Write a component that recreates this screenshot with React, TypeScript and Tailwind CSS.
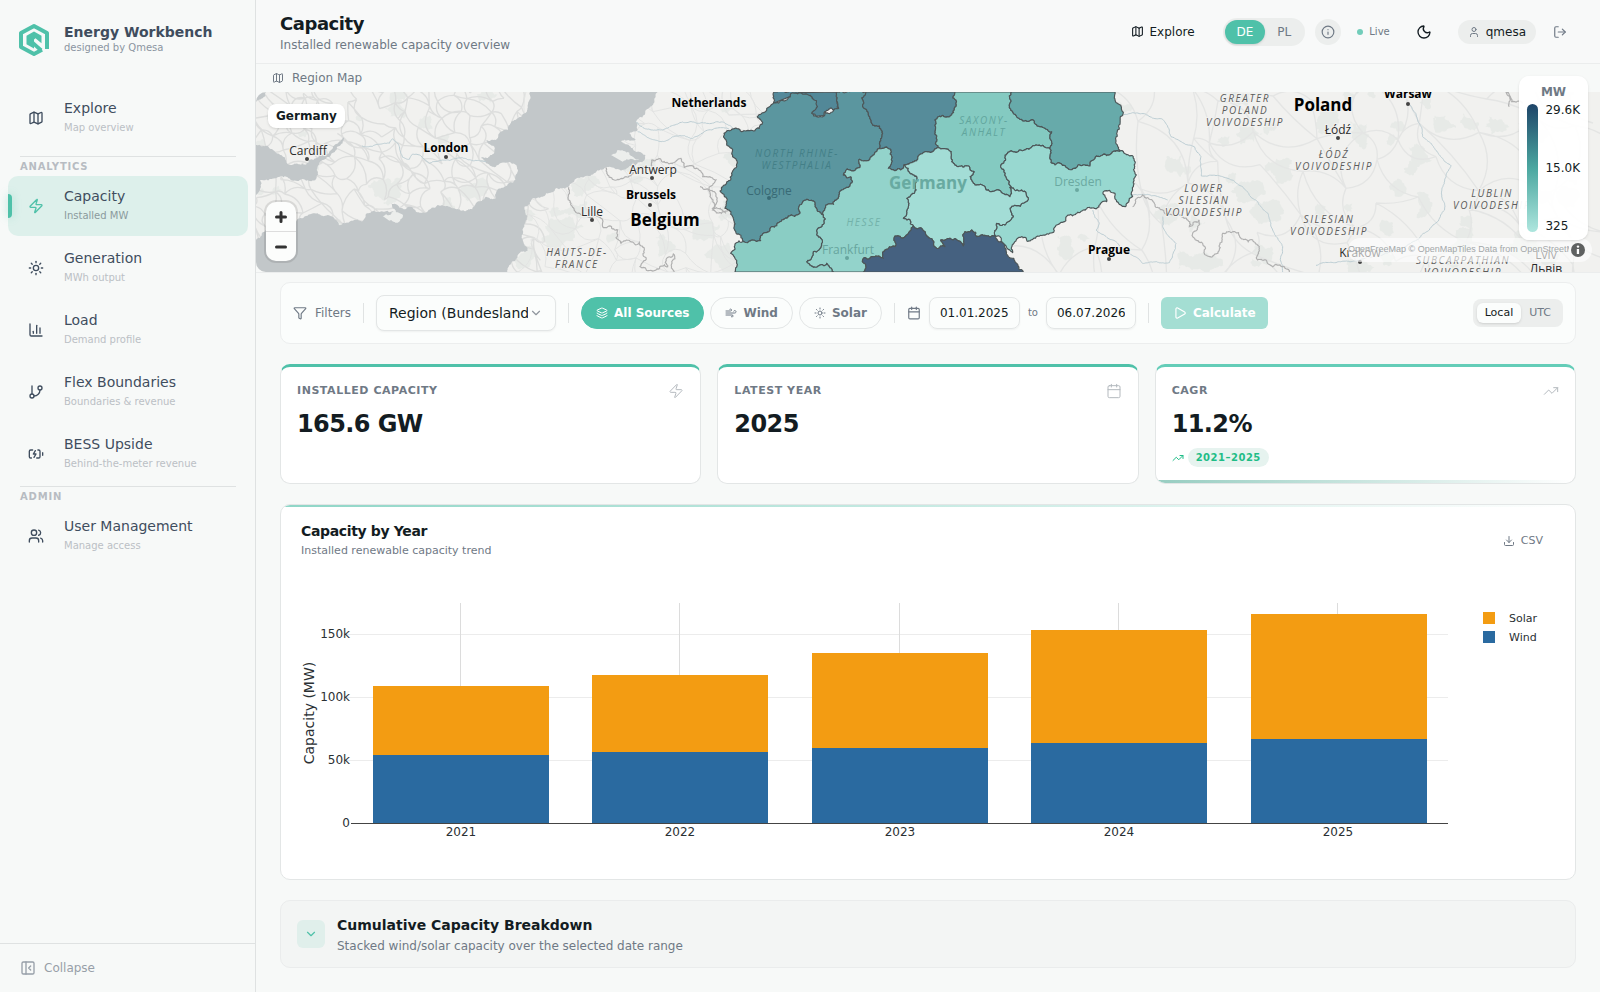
import type { ReactNode } from 'react';
import {
  BatteryCharging,
  Calendar,
  ChartColumn,
  ChevronDown,
  Download,
  Filter,
  GitBranch,
  Info,
  Layers,
  LogOut,
  Map as MapIcon,
  Moon,
  PanelLeftClose,
  Play,
  Sun,
  TrendingUp,
  User,
  Users,
  Wind,
  Zap,
  type LucideIcon,
} from 'lucide-react';

interface NavEntry {
  readonly title: string;
  readonly hint: string;
  readonly icon: LucideIcon;
  readonly active?: boolean;
}

const analyticsNav: readonly NavEntry[] = [
  { title: 'Capacity', hint: 'Installed MW', icon: Zap, active: true },
  { title: 'Generation', hint: 'MWh output', icon: Sun },
  { title: 'Load', hint: 'Demand profile', icon: ChartColumn },
  { title: 'Flex Boundaries', hint: 'Boundaries & revenue', icon: GitBranch },
  { title: 'BESS Upside', hint: 'Behind-the-meter revenue', icon: BatteryCharging },
];

function Logo() {
  return (
    <svg width="32" height="34" viewBox="0 0 32 34" fill="none" aria-hidden="true">
      <path
        d="M24 26.8 L16 31 L3 24 V10 L16 3 L29 10 V26"
        stroke="#4fc1a9"
        strokeWidth="4"
        strokeLinejoin="round"
      />
      <path d="M16 8.5 L23.5 12.7 V20.3 L17.5 15.2 L16 16.4 V25.5 L8.5 21.3 V12.7 Z" fill="#4fc1a9" />
      <path d="M16 18.5 L24.5 26 L21 28 L16 23.5 Z" fill="#4fc1a9" />
    </svg>
  );
}

function NavItem({ title, hint, icon: Icon, active }: NavEntry) {
  return (
    <a
      href="#"
      aria-current={active ? 'page' : undefined}
      className={`relative flex h-15 items-center gap-5 rounded-[10px] pl-5 ${
        active ? 'bg-[#ddf0eb]' : ''
      }`}
    >
      {active && (
        <span className="absolute left-0 top-[18px] h-6 w-1 rounded-r bg-[#4fc1a9] shadow-[0_0_8px_rgba(79,193,169,0.4)]" />
      )}
      <Icon size={16} className={active ? 'text-[#4fc1a9]' : 'text-[#3f4d5e]'} />
      <span className="flex flex-col">
        <span className="text-sm leading-5 text-[#3f4d5e]">{title}</span>
        <span className={`text-[10px] leading-5 ${active ? 'text-[#8b9a9d]' : 'text-[#bbc0c5]'}`}>
          {hint}
        </span>
      </span>
    </a>
  );
}

function NavHeading({ children }: { readonly children: ReactNode }) {
  return (
    <h2 className="mx-3 border-t border-[#dfe2e2] pb-px pt-0.5 text-[10px] font-bold leading-4 tracking-[0.08em] text-[#b7bcc2]">
      {children}
    </h2>
  );
}

function Sidebar() {
  return (
    <aside className="flex w-64 shrink-0 flex-col border-r border-[#dfe2e2] bg-[#f7f9f8]">
      <div className="flex h-20 items-center gap-3.5 pl-[18px]">
        <Logo />
        <div>
          <p className="text-sm font-bold leading-4 text-[#3f4d5e]">Energy Workbench</p>
          <p className="text-[10px] leading-4 text-[#8b95a1]">designed by Qmesa</p>
        </div>
      </div>
      <nav className="flex flex-col pl-2 pr-[7px] pt-2">
        <NavItem title="Explore" hint="Map overview" icon={MapIcon} />
        <div className="mt-2">
          <NavHeading>ANALYTICS</NavHeading>
        </div>
        <div className="flex flex-col gap-0.5 pb-0.5">
          {analyticsNav.map((entry) => (
            <NavItem key={entry.title} {...entry} />
          ))}
        </div>
        <NavHeading>ADMIN</NavHeading>
        <NavItem title="User Management" hint="Manage access" icon={Users} />
      </nav>
      <div className="mt-auto border-t border-[#dfe2e2] px-5 py-4">
        <button type="button" className="flex items-center gap-2 text-xs text-[#979fa8]">
          <PanelLeftClose size={16} />
          Collapse
        </button>
      </div>
    </aside>
  );
}

function Header() {
  return (
    <header className="flex h-16 items-center justify-between border-b border-[#ebeded] bg-[#f8f9f9] px-6">
      <div className="pt-0.5">
        <h1 className="text-lg font-bold leading-6 tracking-tight text-[#131c22]">Capacity</h1>
        <p className="text-xs leading-[18px] text-[#6f7985]">Installed renewable capacity overview</p>
      </div>
      <div className="flex items-center">
        <button type="button" className="mr-7 flex items-center gap-1.5 text-xs text-[#131c22]">
          <MapIcon size={13} />
          Explore
        </button>
        <div className="mr-2.5 flex rounded-full bg-[#eceeed] p-0.5 text-xs text-[#6f7985]">
          <button type="button" className="h-6 rounded-full bg-[#4fc1a9] px-3 text-white shadow-sm">
            DE
          </button>
          <button type="button" className="h-6 rounded-full px-3">
            PL
          </button>
        </div>
        <button
          type="button"
          aria-label="About this data"
          className="mr-4 flex size-[26px] items-center justify-center rounded-full bg-[#eceeed] text-[#6f7985]"
        >
          <Info size={14} />
        </button>
        <span className="flex items-center gap-1.5 text-[10px] text-[#6f7985]">
          <span className="size-1.5 rounded-full bg-[#72cdba]" />
          Live
        </span>
        <button
          type="button"
          aria-label="Dark mode"
          className="mx-[18px] flex size-8 items-center justify-center text-[#131c22]"
        >
          <Moon size={16} />
        </button>
        <span className="mr-2 flex h-6 items-center gap-1.5 rounded-full bg-[#eceeed] px-2.5 text-xs text-[#131c22]">
          <User size={12} className="text-[#6f7985]" />
          qmesa
        </span>
        <button
          type="button"
          aria-label="Log out"
          className="flex size-8 items-center justify-center text-[#6f7985]"
        >
          <LogOut size={14} />
        </button>
      </div>
    </header>
  );
}

/* ---------- Map ---------- */

type Pt = readonly [number, number];

// Stable pseudo random value in -1..1 for a pair of numbers
function noise(a: number, b: number) {
  const s = Math.sin(a * 12.9898 + b * 78.233) * 43758.5453;
  return (s - Math.floor(s)) * 2 - 1;
}

function parse(line: string): Pt[] {
  return line.split(' ').map((pair) => {
    const [x, y] = pair.split(',').map(Number);
    return [x, y] as const;
  });
}

// Midpoint displacement, gives straight segments the look of a surveyed border
function roughen(points: readonly Pt[], amount: number): Pt[] {
  const out: Pt[] = [points[0]];
  const split = (a: Pt, b: Pt) => {
    const dx = b[0] - a[0];
    const dy = b[1] - a[1];
    const length = Math.hypot(dx, dy);
    // segments longer than this only run along the frame
    if (length < 5 || length > 300) {
      out.push(b);
      return;
    }
    const shift = noise(a[0] + b[0], a[1] + b[1]) * amount;
    const mid: Pt = [(a[0] + b[0]) / 2 - dy * shift, (a[1] + b[1]) / 2 + dx * shift];
    split(a, mid);
    split(mid, b);
  };
  for (let i = 1; i < points.length; i++) split(points[i - 1], points[i]);
  return out;
}

function toPath(points: readonly Pt[], closed = false) {
  return 'M' + points.map(([x, y]) => `${x.toFixed(1)} ${y.toFixed(1)}`).join('L') + (closed ? 'Z' : '');
}

const rough = (line: string, closed = false, amount = 0.2) =>
  toPath(roughen(parse(line), amount), closed);

// Borders shared by two states, each stored once
const arcs: Record<string, Pt[]> = Object.fromEntries(
  Object.entries({
    nrwWest:
      '220,70 200,86 185,100 172,110 188,128 178,145 150,152 125,155 95,148 72,160 78,180 95,205 105,235 100,270 92,300 60,333 80,355 75,385 103,425 105,452 122,465 132,485',
    nrwTop: '498,36 412,36 410,60 416,85 375,95 372,108 350,110 335,100 352,80 335,50 300,38 250,62 220,70',
    niTop: '220,70 222,36 300,38',
    niPocket: '300,38 335,50 352,80 335,100 350,110 372,108 375,95 416,85 410,60 412,36',
    nrwRlp: '132,485 182,482 190,460 215,440 240,425 265,408 300,400 320,358 345,370 370,405',
    nrwHe: '370,405 378,375 415,355 425,330 450,318 452,290 430,285 440,268 480,262 478,238 505,242 538,205',
    nrwNi: '538,205 548,160 515,130 505,100 488,75 498,36',
    niHe: '538,205 572,208 575,235 565,265 585,272 612,255',
    niTh: '612,255 650,242 675,215 715,203',
    niSt: '715,203 705,160 705,120 755,105 768,70 765,36',
    stTh: '715,203 745,208 755,245 805,258 822,275 810,290 825,315 870,335 930,350',
    stSn: '930,350 935,322 918,290 920,222 960,210 1010,195 1048,205',
    stBb: '1048,205 1055,185 1055,155 1020,140 965,118 930,85 935,36',
    bbSn: '1048,205 1065,255 1075,248 1130,262 1170,258 1190,228 1230,224 1270,215',
    bbEast: '1270,215 1250,160 1268,105 1262,75 1245,60 1245,36',
    snEast:
      '1270,215 1305,250 1309,285 1300,320 1298,350 1275,380 1250,365 1245,340 1210,335 1220,365 1150,390 1105,405 1080,430 1030,465 965,470 938,518 915,495 885,467',
    snTh: '885,467 890,430 915,435 940,410 930,385 985,358 965,330 930,322 930,350',
    heTh: '612,255 630,280 650,290 648,330 620,355 625,380 610,415 630,420 640,438',
    thBy: '640,438 665,445 690,475 710,505 735,500 722,480 750,475 775,482 790,498 795,455 815,450 830,470 885,467',
    byEast: '885,467 915,495 925,530 950,550 970,576',
    heBy: '640,438 620,465 585,468 585,500 555,510 550,535 520,530 490,535 490,576',
    heRlp: '370,405 372,430 350,465 365,495 340,515 320,545 340,562 380,550 400,576',
    rlpWest: '132,485 105,492 92,520 105,576',
  }).map(([name, line]) => [name, roughen(parse(line), 0.24)]),
);

// A leading minus walks the arc backwards
const ring = (names: string) =>
  toPath(
    names.split(' ').flatMap((name) => (name[0] === '-' ? [...arcs[name.slice(1)]].reverse() : arcs[name])),
    true,
  );

const states = [
  { id: 'Lower Saxony West', fill: '#54899a', d: ring('niTop') },
  { id: 'Osnabrueck', fill: '#528898', d: ring('niPocket') },
  { id: 'North Rhine-Westphalia', fill: '#5b969f', d: ring('nrwWest nrwRlp nrwHe nrwNi nrwTop') },
  { id: 'Lower Saxony', fill: '#568c9a', d: ring('nrwNi -niSt -niTh -niHe') },
  { id: 'Saxony-Anhalt', fill: '#84cac1', d: ring('niSt -stBb -stSn -stTh') },
  { id: 'Brandenburg', fill: '#67aaaa', d: ring('stBb -bbEast -bbSn') },
  { id: 'Saxony', fill: '#98d8d0', d: ring('bbSn snEast snTh stSn') },
  { id: 'Thuringia', fill: '#a3ddd6', d: ring('niTh stTh -snTh -thBy -heTh') },
  { id: 'Hesse', fill: '#93d3cb', d: ring('nrwHe niHe heTh heBy -heRlp') },
  { id: 'Rhineland-Palatinate', fill: '#8acdc4', d: ring('nrwRlp heRlp -rlpWest') },
  { id: 'Bavaria', fill: '#456180', d: ring('-heBy thBy byEast') },
];

const seas = [
  '822,36 820,60 806,100 785,115 765,125 755,150 730,160 720,180 690,182 715,200 712,222 675,232 690,250 715,262 783,260 778,300 745,320 720,340 718,357 690,350 660,370 628,394 580,380 535,383 480,395 465,380 430,384 405,370 420,392 385,395 330,402 318,425 262,428 252,436 240,420 215,405 185,400 150,408 120,425 60,440 25,455 0,480 -400,500 -400,600 725,600 760,555 790,520 815,512 803,490 805,440 805,380 830,355 870,340 935,322 985,290 1050,262 1110,268 1160,245 1168,225 1130,205 1095,185 1140,180 1120,160 1145,150 1140,125 1170,90 1195,60 1205,36',
  '0,195 35,198 60,218 105,255 150,255 180,235 205,225 240,192 264,172 262,182 225,225 200,240 182,270 180,297 120,302 60,295 12,300 15,320 0,345',
  '0,36 30,36 20,55 0,66',
].map((line) => rough(line, true));

const islands = ['380,408 415,392 441,405 425,428 400,422', '1065,225 1085,210 1120,218 1150,240 1100,245'].map(
  (line) => rough(line, true),
);

const rivers = [
  '318,198 360,194 400,190 410,176 430,200 440,232 460,238 470,222 495,228 520,250 560,240 600,236 650,242 690,245',
  '1140,125 1165,145 1220,150 1280,126 1330,130 1400,126 1440,150 1480,160',
  '1145,155 1180,175 1220,184 1260,168 1310,175 1350,152 1420,148',
  '2600,346 2700,348 2735,360',
  '2600,106 2720,118 2740,150 2745,170 2780,188 2815,200 2835,230 2836,288 2900,290 2960,320 3005,365 3036,400 3050,450 3080,500 3080,576',
  '3462,75 3490,130 3500,170 3560,235 3586,258 3566,300 3566,390 3520,450 3450,500 3350,530 3240,548 3180,556',
  '2510,390 2530,430 2520,450 2570,480 2620,520 2660,550 2740,548 2760,490 2720,440 2720,410',
].map((line) => rough(line, false, 0.1));

const borders = [
  '938,322 945,370 970,400 1000,412 1035,415 1040,440 1085,450 1095,490 1150,488 1165,510 1152,560 1200,570 1235,560 1232,535 1252,522 1255,576',
  '1050,262 1055,285 1110,290 1190,262 1188,240 1230,248 1275,235 1285,262 1340,290 1380,300 1362,350 1370,390 1405,395 1440,385',
  '2630,380 2660,345 2690,362 2720,390 2800,440 2830,420 2810,460 2860,530 2890,510 2900,460 2990,480 3010,500 3005,540 3050,560 3100,576',
  '1332,320 1380,345 1370,385 1410,400',
  '3800,70 3750,36 3760,80',
].map((line) => rough(line, false, 0.25));

// Loose street grid, a jittered lattice with curved links
function roadNet(x0: number, x1: number, step: number, seed: number) {
  const node = (i: number, j: number): Pt => [
    x0 + (i + noise(i + seed, j) * 0.45) * step,
    20 + (j + noise(j + seed, i + 9) * 0.45) * step,
  ];
  const parts: string[] = [];
  for (let i = 0; i * step < x1 - x0; i++) {
    for (let j = 0; j * step < 580; j++) {
      const a = node(i, j);
      for (const [di, dj] of [[1, 0], [0, 1], [1, 1]]) {
        if (noise(i * 3 + di + seed, j * 7 + dj) > 0.4) continue;
        const b = node(i + di, j + dj);
        const bend = noise(a[0], b[1]) * 0.5;
        const cx = (a[0] + b[0]) / 2 - (b[1] - a[1]) * bend;
        const cy = (a[1] + b[1]) / 2 + (b[0] - a[0]) * bend;
        parts.push(`M${a[0] | 0} ${a[1] | 0}Q${cx | 0} ${cy | 0} ${b[0] | 0} ${b[1] | 0}`);
      }
    }
  }
  return parts.join('');
}

const roads = [
  { d: roadNet(0, 840, 46, 3), width: 4, stroke: '#dddedd' },
  { d: roadNet(800, 1500, 68, 11), width: 3, stroke: '#e3e4e3' },
  { d: roadNet(1460, 4060, 130, 27), width: 4, stroke: '#e4e5e4' },
];

const woods = Array.from({ length: 150 }, (_, i) => {
  const cx = (noise(i, 4) + 1) * 2020;
  const cy = 306 + noise(i, 8) * 270;
  const size = 10 + (noise(i, 15) + 1) * 15;
  const blob = Array.from({ length: 6 }, (_, k): Pt => {
    const r = size * (0.9 + noise(i, k) * 0.5);
    return [cx + Math.cos(k * 1.05) * r * 1.2, cy + Math.sin(k * 1.05) * r];
  });
  return toPath(roughen([...blob, blob[0]], 0.3), true);
}).join('');

interface MapLabel {
  readonly text: string;
  readonly x: number;
  readonly y: number;
  readonly dot?: readonly [number, number];
  readonly kind: 'country' | 'capital' | 'city' | 'region';
  readonly tint?: string;
}

const mapLabels: readonly MapLabel[] = [
  { text: 'Cardiff', x: 52, y: 63, dot: [51, 67], kind: 'city' },
  { text: 'London', x: 190, y: 60, dot: [190, 65], kind: 'capital' },
  { text: 'Netherlands', x: 453, y: 15, kind: 'capital' },
  { text: 'Antwerp', x: 397, y: 82, dot: [396, 86], kind: 'city' },
  { text: 'Brussels', x: 395, y: 107, dot: [394, 113], kind: 'capital' },
  { text: 'Lille', x: 336, y: 124, dot: [336, 128], kind: 'city' },
  { text: 'Belgium', x: 409, y: 134, kind: 'country' },
  { text: 'HAUTS-DE-', x: 321, y: 164, kind: 'region' },
  { text: 'FRANCE', x: 321, y: 176, kind: 'region' },
  { text: 'NORTH RHINE-', x: 541, y: 65, kind: 'region', tint: '#437f87' },
  { text: 'WESTPHALIA', x: 541, y: 77, kind: 'region', tint: '#437f87' },
  { text: 'Cologne', x: 513, y: 103, dot: [513, 106], kind: 'city', tint: '#386a75' },
  { text: 'SAXONY-', x: 728, y: 32, kind: 'region', tint: '#62a69e' },
  { text: 'ANHALT', x: 728, y: 44, kind: 'region', tint: '#62a69e' },
  { text: 'Germany', x: 672, y: 97, kind: 'country', tint: '#68aaa1' },
  { text: 'HESSE', x: 608, y: 134, kind: 'region', tint: '#72b1a9' },
  { text: 'Frankfurt', x: 592, y: 162, dot: [591, 166], kind: 'city', tint: '#67a59e' },
  { text: 'Dresden', x: 822, y: 94, dot: [821, 98], kind: 'city', tint: '#6ba9a1' },
  { text: 'Prague', x: 853, y: 162, dot: [853, 167], kind: 'capital' },
  { text: 'GREATER', x: 989, y: 10, kind: 'region' },
  { text: 'POLAND', x: 989, y: 22, kind: 'region' },
  { text: 'VOIVODESHIP', x: 989, y: 34, kind: 'region' },
  { text: 'Poland', x: 1067, y: 19, kind: 'country' },
  { text: 'Warsaw', x: 1152, y: 6, dot: [1152, 12], kind: 'capital' },
  { text: 'Łódź', x: 1082, y: 42, dot: [1082, 46], kind: 'city' },
  { text: 'ŁÓDŹ', x: 1078, y: 66, kind: 'region' },
  { text: 'VOIVODESHIP', x: 1078, y: 78, kind: 'region' },
  { text: 'LOWER', x: 948, y: 100, kind: 'region' },
  { text: 'SILESIAN', x: 948, y: 112, kind: 'region' },
  { text: 'VOIVODESHIP', x: 948, y: 124, kind: 'region' },
  { text: 'SILESIAN', x: 1073, y: 131, kind: 'region' },
  { text: 'VOIVODESHIP', x: 1073, y: 143, kind: 'region' },
  { text: 'LUBLIN', x: 1236, y: 105, kind: 'region' },
  { text: 'VOIVODESHIP', x: 1236, y: 117, kind: 'region' },
  { text: 'Kraków', x: 1104, y: 165, dot: [1104, 170], kind: 'city' },
  { text: 'SUBCARPATHIAN', x: 1207, y: 172, kind: 'region' },
  { text: 'VOIVODESHIP', x: 1207, y: 184, kind: 'region' },
  { text: 'Lviv', x: 1290, y: 167, kind: 'city' },
  { text: 'Львів', x: 1290, y: 181, kind: 'city' },
];

const labelClass = {
  country: 'text-[17px] font-bold fill-black',
  capital: 'text-xs font-bold fill-black',
  city: 'text-xs fill-[#2b2b2b]',
  region: 'text-[10px] italic tracking-[0.16em] fill-[#5c5c5c]',
};

function RegionMap() {
  return (
    <section aria-label="Region map">
      <h2 className="flex h-7 items-center gap-2 px-4 text-xs text-[#6f7985]">
        <MapIcon size={12} />
        Region Map
      </h2>
      <div className="relative border-b border-[#ebeded]">
        <svg
          viewBox="0 0 1344 180"
          preserveAspectRatio="xMinYMin slice"
          className="block h-[180px] w-full rounded-l-[10px] bg-[#f1f1ef] font-['Open_Sans','Noto_Sans',sans-serif]"
          role="img"
          aria-label="Installed capacity by federal state"
        >
          <g transform="translate(0 -12) scale(0.33333)">
            <path d={woods} fill="#e7eae7" />
            {roads.map((road) => (
              <path key={road.d.length} d={road.d} fill="none" stroke={road.stroke} strokeWidth={road.width} />
            ))}
            {seas.map((d) => (
              <path key={d.length} d={d} fill="#c2c7c9" />
            ))}
            {islands.map((d) => (
              <path key={d.length} d={d} fill="#eceeec" />
            ))}
            {rivers.map((d) => (
              <path key={d} d={d} fill="none" stroke="#bccdd3" strokeWidth="3" />
            ))}
            {borders.map((d) => (
              <path key={d} d={d} fill="none" stroke="#b0b0b0" strokeWidth="3.5" />
            ))}
            <g transform="translate(1332 0)" stroke="#4d5658" strokeWidth="3.5" strokeLinejoin="round">
              {states.map((state) => (
                <path key={state.id} d={state.d} fill={state.fill} />
              ))}
            </g>
          </g>
          {mapLabels.map((label) => (
            <g key={`${label.text}-${label.x}`}>
              <text
                x={label.x}
                y={label.y}
                textAnchor="middle"
                className={`${labelClass[label.kind]} ${label.tint ? '' : 'stroke-[#f1f1ef] stroke-2 [paint-order:stroke]'}`}
                style={label.tint ? { fill: label.tint } : undefined}
              >
                {label.text}
              </text>
              {label.dot && (
                <circle cx={label.dot[0]} cy={label.dot[1]} r="2" fill={label.tint ?? '#444444'} />
              )}
            </g>
          ))}
        </svg>

        <span className="absolute left-3 top-3 flex h-6 items-center rounded-lg bg-white px-2 text-xs font-bold text-[#131c22] shadow-sm">
          Germany
        </span>

        <div className="absolute bottom-[11px] left-2.5 flex w-[30px] flex-col overflow-hidden rounded-[10px] bg-[#fcfdfc] shadow-[0_0_0_2px_rgba(0,0,0,0.1)]">
          <button type="button" aria-label="Zoom in" className="flex h-[29px] items-center justify-center">
            <svg width="12" height="12" viewBox="0 0 12 12" stroke="#333" strokeWidth="3" strokeLinecap="round">
              <path d="M1.5 6h9M6 1.5v9" />
            </svg>
          </button>
          <button
            type="button"
            aria-label="Zoom out"
            className="flex h-[30px] items-center justify-center border-t border-[#dddddd]"
          >
            <svg width="12" height="12" viewBox="0 0 12 12" stroke="#333" strokeWidth="3" strokeLinecap="round">
              <path d="M1.5 6h9" />
            </svg>
          </button>
        </div>

        <div className="absolute bottom-2.5 right-2 flex h-6 w-[244px] items-center justify-end gap-0.5 rounded-xl bg-white/60 pr-[7px] font-['Liberation_Sans',sans-serif] text-[9px] text-[#a3a7a9]">
          <span className="w-[222px] overflow-hidden whitespace-nowrap">
            OpenFreeMap © OpenMapTiles Data from OpenStreetMap
          </span>
          <svg width="14" height="14" viewBox="0 0 14 14" className="shrink-0">
            <circle cx="7" cy="7" r="7" fill="#5f6161" />
            <circle cx="7" cy="3.6" r="1.2" fill="#fff" />
            <path d="M5.8 6h2.3v5H5.8z" fill="#fff" />
          </svg>
        </div>

        <div className="absolute -top-4 right-3 flex h-[164px] w-[69px] flex-col rounded-[10px] bg-white/95 px-2 pb-2 pt-2 shadow-sm">
          <p className="text-center text-xs font-bold leading-4 text-[#6f7985]">MW</p>
          <div className="mt-1 flex flex-1 gap-[7px]">
            <div className="w-3 rounded-full bg-[linear-gradient(to_bottom,#1e4468,#4ba7a0_50%,#aee6de)]" />
            <div className="flex flex-col justify-between text-xs leading-3 text-[#131c22]">
              <span>29.6K</span>
              <span>15.0K</span>
              <span>325</span>
            </div>
          </div>
        </div>
      </div>
    </section>
  );
}

/* ---------- Filters ---------- */

function Divider() {
  return <span className="h-5 w-px bg-[#e0e3e3]" aria-hidden="true" />;
}

function FilterBar() {
  return (
    <form className="flex items-center gap-3 rounded-[10px] border border-[#eceeee] bg-[#fbfdfc] p-3 text-xs text-[#6f7985]">
      <span className="flex items-center gap-2">
        <Filter size={14} />
        Filters
      </span>
      <Divider />
      <div className="relative">
        <select
          aria-label="Region"
          className="h-9 w-[180px] appearance-none rounded-lg border border-[#e3e6e6] bg-[#fbfdfc] pl-3 pr-[27px] text-sm text-[#131c22] shadow-xs"
        >
          <option>Region (Bundesland)</option>
        </select>
        <ChevronDown size={14} className="pointer-events-none absolute right-[13px] top-[11px] text-[#8f969e]" />
      </div>
      <Divider />
      <div className="flex items-center gap-1.5 font-bold">
        <button
          type="button"
          aria-pressed="true"
          className="flex h-8 items-center gap-1.5 rounded-full border border-[#4fc1a9] bg-[#4fc1a9] px-3.5 text-white"
        >
          <Layers size={12} />
          All Sources
        </button>
        <button type="button" className="flex h-8 items-center gap-1.5 rounded-full border border-[#e3e6e6] px-3.5">
          <Wind size={12} />
          Wind
        </button>
        <button type="button" className="flex h-8 items-center gap-1.5 rounded-full border border-[#e3e6e6] px-3.5">
          <Sun size={12} />
          Solar
        </button>
      </div>
      <Divider />
      <div className="flex items-center gap-2">
        <Calendar size={14} />
        <input
          type="text"
          aria-label="Start date"
          defaultValue="01.01.2025"
          className="h-8 w-[91px] rounded-lg border border-[#e3e6e6] px-2.5 text-[#131c22] shadow-xs"
        />
        <span className="text-[10px]">to</span>
        <input
          type="text"
          aria-label="End date"
          defaultValue="06.07.2026"
          className="h-8 w-[90px] rounded-lg border border-[#e3e6e6] px-2.5 text-[#131c22] shadow-xs"
        />
      </div>
      <Divider />
      <button
        type="submit"
        disabled
        className="flex h-8 items-center gap-1.5 rounded-md bg-[#a4ded3] px-3 font-bold text-white"
      >
        <Play size={14} />
        Calculate
      </button>
      <div className="ml-auto flex rounded-lg bg-[#eceeed] p-1 text-[11px]">
        <button type="button" className="h-5 rounded-md bg-[#fbfdfc] px-2 text-[#131c22] shadow-sm">
          Local
        </button>
        <button type="button" className="h-5 px-2">
          UTC
        </button>
      </div>
    </form>
  );
}

/* ---------- Cards ---------- */

interface KpiCardProps {
  readonly label: string;
  readonly value: string;
  readonly icon: LucideIcon;
  readonly period?: string;
}

function KpiCard({ label, value, icon: Icon, period }: KpiCardProps) {
  return (
    <article
      className={`relative flex min-h-[120px] flex-col overflow-hidden rounded-[10px] border border-t-3 border-[#e3e6e6] bg-white px-4 pt-4 ${
        period ? 'border-t-[#64cdb8]' : 'border-t-[#4fc1a9]'
      }`}
    >
      <div className="flex items-start justify-between">
        <h3 className="text-[11px] font-bold leading-4 tracking-wider text-[#6f7985]">{label}</h3>
        <Icon size={16} strokeWidth={1.5} className="text-[#b4b9be]" />
      </div>
      <p className="mt-[9px] text-2xl font-bold leading-8 tracking-tight text-[#131c22]">{value}</p>
      {period && (
        <>
          <p className="mt-2 flex items-center gap-1 text-[10px] font-bold text-[#1fbd87]">
            <TrendingUp size={12} />
            <span className="rounded-full bg-[#e6f3ef] px-2 leading-[19px] tracking-wider">{period}</span>
          </p>
          <span className="absolute inset-x-0 bottom-0 h-[3px] bg-linear-to-r from-[#97cdc1] to-transparent" />
        </>
      )}
    </article>
  );
}

/* ---------- Chart ---------- */

// MW installed per year, in thousands
const capacity = [
  { year: '2021', wind: 54, solar: 54.8 },
  { year: '2022', wind: 56.4, solar: 61.1 },
  { year: '2023', wind: 59.5, solar: 75.4 },
  { year: '2024', wind: 63.5, solar: 89.7 },
  { year: '2025', wind: 66.7, solar: 98.9 },
];

const PLOT = { left: 50, right: 1147, top: 34, bottom: 254 };
const PX_PER_K = 1.26;

function CapacityChart() {
  const slot = (PLOT.right - PLOT.left) / capacity.length;
  const barWidth = slot * 0.8;

  return (
    <svg viewBox="0 0 1254 290" className="block w-full" role="img" aria-label="Capacity by year">
      {[50, 100, 150].map((tick) => (
        <path
          key={tick}
          d={`M${PLOT.left - 6} ${Math.round(PLOT.bottom - tick * PX_PER_K) + 0.5}H${PLOT.right}`}
          stroke="#ececec"
        />
      ))}
      {[0, 50, 100, 150].map((tick) => (
        <text
          key={tick}
          x={PLOT.left - 1}
          y={PLOT.bottom - tick * PX_PER_K + 4}
          textAnchor="end"
          className="fill-[#2a3033] text-xs"
        >
          {tick === 0 ? '0' : `${tick}k`}
        </text>
      ))}
      {capacity.map(({ year, wind, solar }, i) => {
        const x = PLOT.left + slot * i + slot * 0.1;
        const center = Math.round(PLOT.left + slot * (i + 0.5));
        const windTop = Math.round(PLOT.bottom - wind * PX_PER_K);
        const solarTop = Math.round(PLOT.bottom - (wind + solar) * PX_PER_K);
        return (
          <g key={year}>
            <path d={`M${center - 0.5} ${PLOT.top}V${PLOT.bottom}`} stroke="#dcdcdc" />
            <rect
              x={Math.round(x)}
              y={solarTop}
              width={Math.round(barWidth)}
              height={windTop - solarTop}
              fill="#f39c12"
            />
            <rect
              x={Math.round(x)}
              y={windTop}
              width={Math.round(barWidth)}
              height={PLOT.bottom - windTop}
              fill="#2a6aa0"
            />
            <text x={center} y={PLOT.bottom + 13} textAnchor="middle" className="fill-[#2a3033] text-xs">
              {year}
            </text>
          </g>
        );
      })}
      <path d={`M${PLOT.left} ${PLOT.bottom + 0.5}H${PLOT.right}`} stroke="#444444" />
      <text
        transform="translate(13 144) rotate(-90)"
        textAnchor="middle"
        className="fill-[#2a3033] text-sm"
      >
        Capacity (MW)
      </text>
      <rect x="1182" y="43" width="12" height="12" fill="#f39c12" />
      <text x="1208" y="53" className="fill-[#2a3033] text-[11px]">
        Solar
      </text>
      <rect x="1182" y="62" width="12" height="12" fill="#2a6aa0" />
      <text x="1208" y="72" className="fill-[#2a3033] text-[11px]">
        Wind
      </text>
    </svg>
  );
}

function ChartCard() {
  return (
    <section className="relative overflow-hidden rounded-[10px] border border-[#e3e6e6] bg-white px-5 pb-5 pt-4">
      <span className="absolute inset-x-0 top-0 h-0.5 bg-linear-to-r from-[#8fd6c7] to-transparent" />
      <div className="flex items-center justify-between">
        <div>
          <h2 className="text-sm font-bold leading-5 tracking-tight text-[#131c22]">Capacity by Year</h2>
          <p className="text-[11px] leading-5 text-[#6f7985]">Installed renewable capacity trend</p>
        </div>
        <button type="button" className="mr-3 flex items-center gap-1.5 text-[11px] text-[#6f7985]">
          <Download size={12} />
          CSV
        </button>
      </div>
      <div className="pt-2">
        <CapacityChart />
      </div>
    </section>
  );
}

function BreakdownCard() {
  return (
    <section className="flex items-center gap-3 rounded-[10px] border border-[#eaecec] bg-[#f3f5f4] px-4 py-[11px]">
      <button
        type="button"
        aria-label="Expand breakdown"
        aria-expanded="false"
        className="flex size-7 items-center justify-center rounded-md bg-[#e0efeb] text-[#4fc1a9]"
      >
        <ChevronDown size={14} />
      </button>
      <div className="pt-0.5">
        <h2 className="text-sm font-bold leading-[22px] text-[#131c22]">Cumulative Capacity Breakdown</h2>
        <p className="text-xs leading-5 text-[#6f7985]">Stacked wind/solar capacity over the selected date range</p>
      </div>
    </section>
  );
}

export default function App() {
  return (
    <div className="flex min-h-screen bg-[#f7f9f8] font-['DejaVu_Sans',sans-serif]">
      <Sidebar />
      <div className="flex min-w-0 flex-1 flex-col">
        <Header />
        <RegionMap />
        <main className="flex flex-col gap-5 px-6 pb-6 pt-[9px]">
          <FilterBar />
          <div className="grid grid-cols-3 gap-4">
            <KpiCard label="INSTALLED CAPACITY" value="165.6 GW" icon={Zap} />
            <KpiCard label="LATEST YEAR" value="2025" icon={Calendar} />
            <KpiCard label="CAGR" value="11.2%" icon={TrendingUp} period="2021–2025" />
          </div>
          <ChartCard />
          <BreakdownCard />
        </main>
      </div>
    </div>
  );
}
